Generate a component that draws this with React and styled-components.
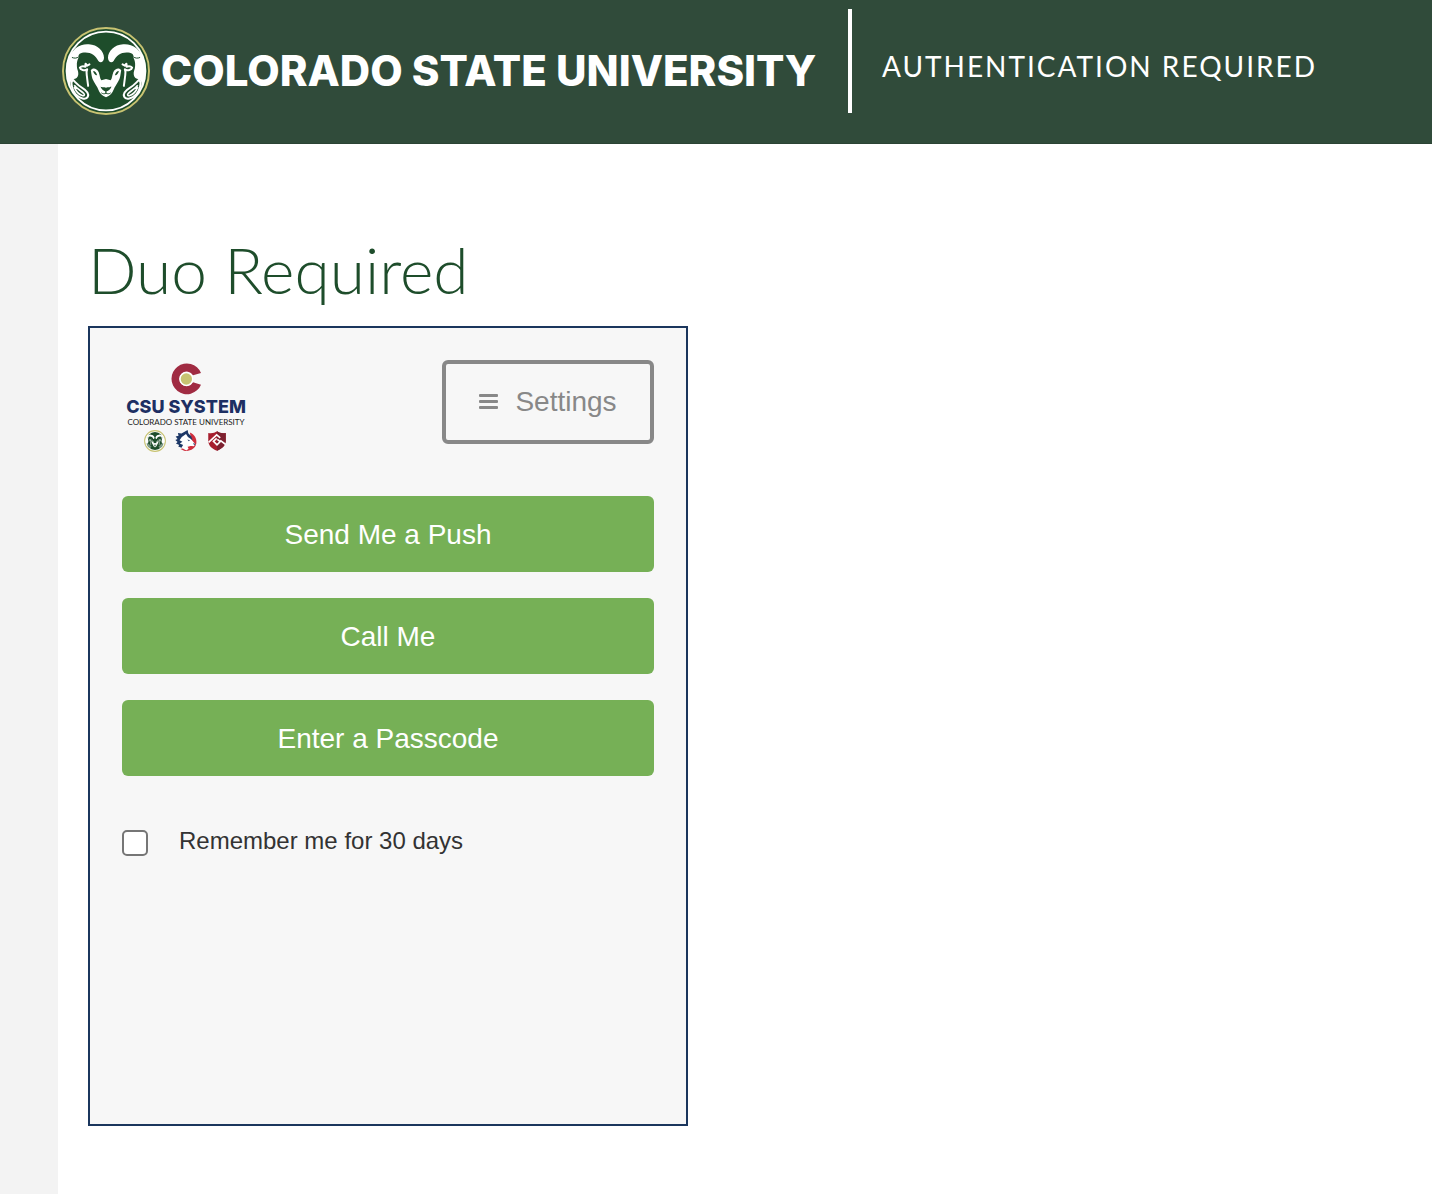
import React from 'react';
import styled, { createGlobalStyle } from 'styled-components';

const colors = {
  header: '#304b3a',
  green: '#1e4d2b',
  gold: '#c8c372',
  rail: '#f3f3f3',
  frame: '#1b365d',
  panel: '#f7f7f7',
  action: '#76b056',
  grey: '#888888',
  navy: '#1d2f63',
  crimson: '#a02b42',
};

const actions = ['Send Me a Push', 'Call Me', 'Enter a Passcode'];

const RamHalf = () => (
  <>
    <path
      fill="#fff"
      d="M49 150 C52 128 60 116 76 99 C88 89 102 86 116 87 C143 88 162 108 162 128 C162 140 152 146 145 138 C137 122 124 112 106 112 C91 112 82 118 86 126 C82 134 79 142 80 153 C80 164 86 170 84 180 C82 188 78 191 68 193 C60 197 59 207 63 220 C52 205 46 176 49 150 Z"
    />
    <path
      fill="none"
      stroke={colors.green}
      strokeWidth="3"
      d="M65 127 C72 130 79 130 86 125"
    />
    <path
      fill={colors.green}
      stroke="#fff"
      strokeWidth="6"
      d="M67 194 C61 202 64 225 76 238 C88 252 108 256 113 246 C118 234 106 225 96 219 C83 212 76 202 67 194 Z"
    />
    <path
      fill="none"
      stroke="#fff"
      strokeWidth="5"
      d="M72 211 C80 222 93 228 101 236 C105 241 101 244 96 242 C86 239 77 229 72 216"
    />
    <path
      fill="none"
      stroke="#fff"
      strokeWidth="6"
      strokeLinecap="round"
      strokeLinejoin="round"
      d="M111 163 C103 169 90 164 89 158 C93 153 100 153 106 155 C108 152 103 148 107 146 L111 152 L118 148 M111 163 C107 172 110 178 111 190 L114 213"
    />
    <path
      fill="#fff"
      d="M122 166 C128 157 140 160 146 172 C150 182 149 191 154 196 L168 192 L168 247 L159 243 C149 237 146 226 142 218 C136 207 126 195 125 184 Z"
    />
    <path
      fill={colors.green}
      d="M129 168 C135 168 140 174 141 181 C136 182 131 176 129 168 Z"
    />
    <path fill={colors.green} d="M151 215 C157 219 162 215 168 219 L168 230 C161 230 155 224 151 215 Z" />
    <path
      fill="none"
      stroke={colors.green}
      strokeWidth="3"
      d="M168 228 L168 235 C163 238 158 237 154 234"
    />
  </>
);

const RamFace = () => (
  <>
    <RamHalf />
    <g transform="matrix(-1 0 0 1 336 0)">
      <RamHalf />
    </g>
  </>
);

const RamSeal = () => (
  <svg width="88" height="88" viewBox="35 35 266 266" aria-hidden="true">
    <circle cx="168" cy="168" r="130" fill={colors.green} stroke={colors.gold} strokeWidth="6" />
    <circle cx="168" cy="168" r="119" fill={colors.green} stroke="#fff" strokeWidth="6" />
    <RamFace />
  </svg>
);

const SmallRamSeal = () => (
  <svg width="22" height="22" viewBox="28 28 280 280" aria-hidden="true">
    <circle cx="168" cy="168" r="132" fill="#fff" stroke={colors.gold} strokeWidth="14" />
    <circle cx="168" cy="168" r="113" fill={colors.green} />
    <RamFace />
  </svg>
);

const SystemMark = () => (
  <svg width="32" height="32" viewBox="180 38 96 96" aria-hidden="true">
    <path
      fill={colors.crimson}
      d="M273 68 A46 46 0 1 0 273 103 L249 96 A22 22 0 1 1 249 75 Z"
    />
    <circle cx="229" cy="86" r="21" fill="#fff" />
    <circle cx="229" cy="86" r="17" fill={colors.gold} />
  </svg>
);

const WolfMark = () => (
  <svg width="22" height="22" viewBox="197 238 68 68" aria-hidden="true">
    <path fill="#cf2e3d" d="M243 246 C257 252 265 265 263 279 C260 296 244 305 225 302 L214 297 L250 286 Z" />
    <path
      fill="#1c3766"
      d="M236 238 L238 248 L247 257 L251 269 L235 266 L219 294 L207 289 L210 284 L200 280 L205 275 L198 269 L205 266 L199 258 L208 256 L206 247 L217 249 Z"
    />
    <path
      fill="#fff"
      d="M218 260 L231 250 L237 260 L246 266 L260 282 L255 288 L242 287 L233 284 L239 296 L232 301 L217 293 L222 284 L212 280 L220 274 L211 270 Z"
    />
    <path fill="#1c3766" d="M235 267 L243 270 L240 273 Z M253 278 L260 281 L256 285 Z" />
  </svg>
);

const ShieldMark = () => (
  <svg width="22" height="22" viewBox="290 241 68 68" aria-hidden="true">
    <path
      fill="#a71e2e"
      d="M324 245 C331 250 341 252 351 250 L351 276 C350 289 339 300 324 305 C308 300 298 289 297 276 L297 250 C307 252 317 250 324 245 Z"
    />
    <path fill="#7d2130" d="M324 245 C331 250 341 252 351 250 L351 276 C350 289 339 300 324 305 Z" />
    <path
      fill="none"
      stroke="#fff"
      strokeWidth="5"
      d="M298 279 L323 256 L334 265 M323 267 L313 276 L324 287 L334 277 L325 270 M334 273 L350 285"
    />
  </svg>
);

const MenuIcon = () => (
  <svg width="20" height="18" viewBox="0 0 20 18" aria-hidden="true">
    <rect x="0" y="1" width="19" height="3" rx="1" fill="currentColor" />
    <rect x="0" y="7" width="19" height="3" rx="1" fill="currentColor" />
    <rect x="0" y="13" width="19" height="3" rx="1" fill="currentColor" />
  </svg>
);

const App = () => {
  const [remember, setRemember] = React.useState(false);

  return (
    <>
      <GlobalStyle />
      <Page>
        <Header>
          <Brand href="#">
            <RamSeal />
            <Wordmark>COLORADO STATE UNIVERSITY</Wordmark>
          </Brand>
          <Divider />
          <HeaderTitle>AUTHENTICATION REQUIRED</HeaderTitle>
        </Header>
        <Body>
          <Main>
            <Title>Duo Required</Title>
            <Panel>
              <PanelTop>
                <SystemLogo>
                  <SystemMark />
                  <SystemName>CSU SYSTEM</SystemName>
                  <SystemTagline>COLORADO STATE UNIVERSITY</SystemTagline>
                  <Campuses>
                    <SmallRamSeal />
                    <WolfMark />
                    <ShieldMark />
                  </Campuses>
                </SystemLogo>
                <SettingsButton type="button">
                  <MenuIcon />
                  Settings
                </SettingsButton>
              </PanelTop>
              <Actions>
                {actions.map((label) => (
                  <ActionButton key={label} type="button">
                    {label}
                  </ActionButton>
                ))}
              </Actions>
              <Remember>
                <Checkbox
                  type="checkbox"
                  checked={remember}
                  onChange={(e) => setRemember(e.target.checked)}
                />
                Remember me for 30 days
              </Remember>
            </Panel>
          </Main>
        </Body>
      </Page>
    </>
  );
};

const GlobalStyle = createGlobalStyle`
  *, *::before, *::after {
    box-sizing: border-box;
  }

  body {
    margin: 0;
    background-color: #fff;
    font-family: "Liberation Sans", Arial, sans-serif;
  }

  svg {
    display: block;
    flex-shrink: 0;
  }
`;

const Page = styled.div`
  display: flex;
  flex-direction: column;
  min-height: 100vh;
`;

const Header = styled.header`
  display: flex;
  align-items: flex-start;
  height: 144px;
  padding: 9px 62px 0;
  color: #fff;
  background-color: ${colors.header};
  border-bottom: 1px solid #2b4334;
`;

const Brand = styled.a`
  display: flex;
  align-items: center;
  gap: 11px;
  padding-top: 18px;
  color: inherit;
  text-decoration: none;
`;

const Wordmark = styled.span`
  font-family: Inter, "Liberation Sans", sans-serif;
  font-size: 42px;
  font-weight: 800;
  line-height: 48px;
  white-space: nowrap;
`;

const Divider = styled.div`
  width: 4px;
  height: 104px;
  margin: 0 30px 0 auto;
  background-color: #fff;
`;

const HeaderTitle = styled.div`
  margin-right: 53px;
  padding-top: 39px;
  font-family: Lato, sans-serif;
  font-size: 28px;
  letter-spacing: 2px;
  line-height: 36px;
  white-space: nowrap;
`;

const Body = styled.div`
  display: flex;
  flex: 1;
  padding-left: 58px;
  background-color: ${colors.rail};
`;

const Main = styled.main`
  flex: 1;
  padding: 86px 30px 68px;
  background-color: #fff;
`;

const Title = styled.h1`
  margin: 0 0 16px;
  color: ${colors.green};
  font-family: Lato, sans-serif;
  font-size: 64px;
  font-weight: 300;
  line-height: 80px;
`;

const Panel = styled.section`
  width: 100%;
  max-width: 600px;
  min-height: 800px;
  padding: 32px;
  background-color: ${colors.panel};
  border: 2px solid ${colors.frame};
`;

const PanelTop = styled.div`
  display: flex;
  align-items: flex-start;
  justify-content: space-between;
  height: 136px;
`;

const SystemLogo = styled.div`
  display: flex;
  flex-direction: column;
  align-items: center;
  width: 128px;
  padding-top: 3px;
`;

const SystemName = styled.div`
  color: ${colors.navy};
  font-family: Inter, "Liberation Sans", sans-serif;
  font-size: 18px;
  font-weight: 800;
  line-height: 24px;
  white-space: nowrap;
`;

const SystemTagline = styled.div`
  color: #222;
  font-family: Lato, sans-serif;
  font-size: 8px;
  line-height: 6px;
  white-space: nowrap;
`;

const Campuses = styled.div`
  display: flex;
  gap: 9px;
  padding-top: 5px;
`;

const SettingsButton = styled.button`
  display: flex;
  align-items: center;
  justify-content: center;
  gap: 16px;
  min-width: 212px;
  height: 84px;
  padding: 0 32px;
  color: ${colors.grey};
  font-family: inherit;
  font-size: 28px;
  line-height: 32px;
  background-color: transparent;
  border: 4px solid ${colors.grey};
  border-radius: 6px;
`;

const Actions = styled.div`
  display: flex;
  flex-direction: column;
  gap: 26px;
`;

const ActionButton = styled.button`
  height: 76px;
  padding: 2px 16px 0;
  color: #fff;
  font-family: inherit;
  font-size: 28px;
  line-height: 32px;
  background-color: ${colors.action};
  border: 0;
  border-radius: 6px;
`;

const Remember = styled.label`
  display: flex;
  align-items: flex-start;
  gap: 31px;
  margin-top: 52px;
  color: #333;
  font-size: 24px;
  line-height: 26px;
`;

const Checkbox = styled.input`
  appearance: none;
  width: 26px;
  height: 26px;
  margin: 2px 0 0;
  background-color: #fff;
  border: 2px solid #767676;
  border-radius: 5px;

  &:checked {
    background-color: ${colors.action};
  }
`;

export default App;
